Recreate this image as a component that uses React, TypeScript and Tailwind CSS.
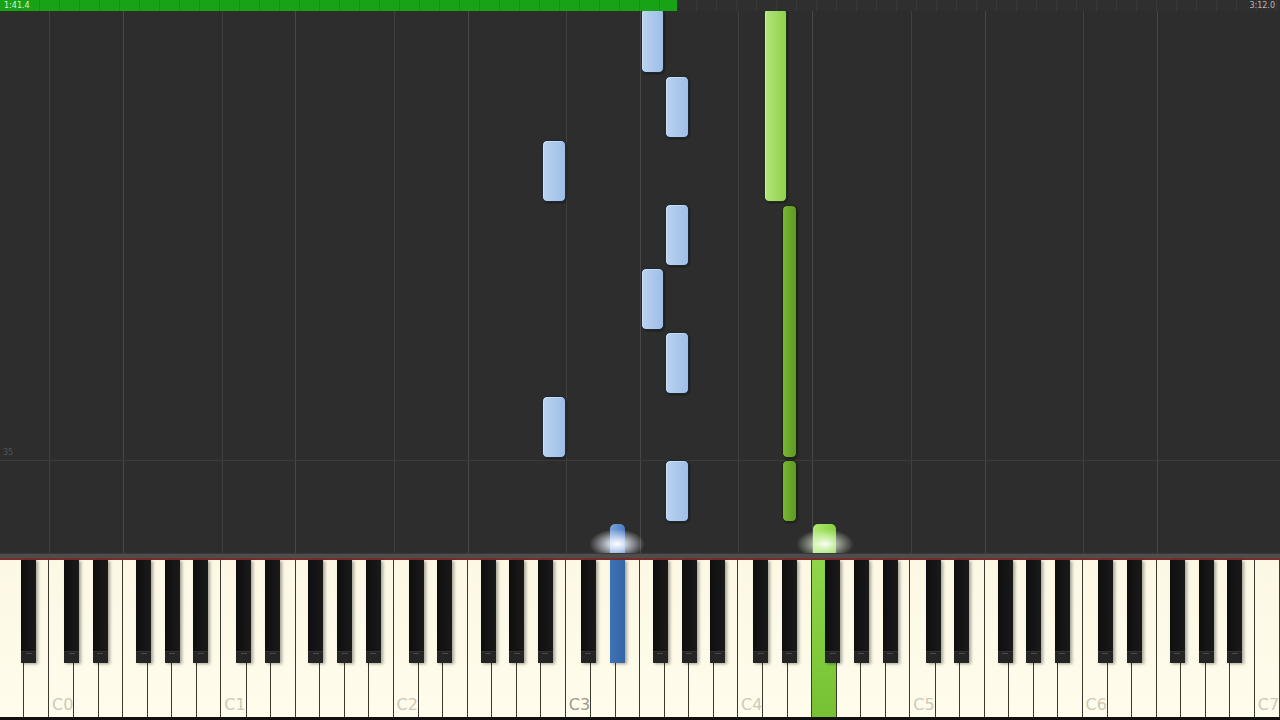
import React from 'react';

const WHITE_W = 1280 / 52;
const OCT = WHITE_W * 7;
const C0_X = WHITE_W * 2;
const BLACK_OFFSETS = [14.8, 43.5, 86.8, 115.5, 144.1];

// white key index: A-1 = 0, B-1 = 1, C0 = 2 ...
const whiteX = (idx: number) => idx * WHITE_W;
const blackX = (octave: number, n: number) => C0_X + octave * OCT + BLACK_OFFSETS[n];

type Note = { x: number; w: number; top: number; bottom: number; kind: 'blue' | 'green' | 'darkgreen' | 'blueHit' | 'greenHit' };

const notes: Note[] = [
  { x: whiteX(26), w: WHITE_W, top: 8, bottom: 73, kind: 'blue' },
  { x: whiteX(27), w: WHITE_W, top: 76, bottom: 138, kind: 'blue' },
  { x: whiteX(22), w: WHITE_W, top: 140, bottom: 202, kind: 'blue' },
  { x: whiteX(27), w: WHITE_W, top: 204, bottom: 266, kind: 'blue' },
  { x: whiteX(26), w: WHITE_W, top: 268, bottom: 330, kind: 'blue' },
  { x: whiteX(27), w: WHITE_W, top: 332, bottom: 394, kind: 'blue' },
  { x: whiteX(22), w: WHITE_W, top: 396, bottom: 458, kind: 'blue' },
  { x: whiteX(27), w: WHITE_W, top: 460, bottom: 522, kind: 'blue' },
  { x: blackX(3, 1), w: 15.3, top: 524, bottom: 560, kind: 'blueHit' },
  { x: whiteX(31), w: WHITE_W, top: 8, bottom: 202, kind: 'green' },
  { x: blackX(4, 1), w: 15.3, top: 205, bottom: 458, kind: 'darkgreen' },
  { x: blackX(4, 1), w: 15.3, top: 460, bottom: 522, kind: 'darkgreen' },
  { x: whiteX(33), w: WHITE_W, top: 524, bottom: 560, kind: 'greenHit' },
];

const noteClass: Record<Note['kind'], string> = {
  blue: 'bg-[linear-gradient(90deg,#b9d3f1,#9ebee6)] border border-[#1e2732] rounded-[5px] shadow-[inset_1px_1px_0_rgba(255,255,255,0.35),1px_1px_2px_rgba(0,0,0,0.4)]',
  green: 'bg-[linear-gradient(90deg,#b3e57c,#8fd24a)] border border-[#26301c] rounded-[5px] shadow-[inset_1px_1px_0_rgba(255,255,255,0.35),1px_1px_2px_rgba(0,0,0,0.4)]',
  darkgreen: 'bg-[linear-gradient(90deg,#78b634,#5c9a22)] border border-[#1d2614] rounded-[5px] shadow-[1px_1px_2px_rgba(0,0,0,0.4)]',
  blueHit: 'bg-[linear-gradient(90deg,#7aa3da,#4c7cbf)] rounded-t-[5px]',
  greenHit: 'bg-[linear-gradient(90deg,#b0e874,#86d03e)] rounded-t-[5px]',
};

const whiteKeys = Array.from({ length: 52 }, (_, i) => i);
const blackKeys: { x: number; pressed?: boolean }[] = [{ x: C0_X - OCT + BLACK_OFFSETS[4] }];
for (let o = 0; o < 7; o++) {
  for (let n = 0; n < 5; n++) {
    blackKeys.push({ x: blackX(o, n), pressed: o === 3 && n === 1 });
  }
}

const gridLines: { x: number; f: boolean }[] = [];
for (let o = 0; o < 7; o++) {
  gridLines.push({ x: C0_X + o * OCT, f: false });
  gridLines.push({ x: C0_X + o * OCT + WHITE_W * 3, f: true });
}

function TopBar() {
  return (
    <div className="h-[11px] flex shrink-0 text-[8px] leading-[11px] font-['DejaVu_Sans',sans-serif]">
      <div className="w-[677px] bg-[#18a317] bg-[repeating-linear-gradient(90deg,transparent_0px,transparent_19px,#139012_19px,#139012_20px)] text-[#d8f0d4] pl-[4px]">
        1:41.4
      </div>
      <div className="flex-1 bg-[#2f2f2f] bg-[repeating-linear-gradient(90deg,transparent_0px,transparent_19px,#383838_19px,#383838_20px)] text-[#b8b8b8] text-right pr-[5px]">
        3:12.0
      </div>
    </div>
  );
}

function NoteField() {
  return (
    <div className="relative h-[542px] shrink-0 overflow-hidden bg-[#2d2d2d]">
      {gridLines.map((g, i) => (
        <div
          key={i}
          className={`absolute top-0 bottom-0 w-px ${g.f ? 'bg-[#474747]' : 'bg-[#3f3f3f]'}`}
          style={{ left: Math.round(g.x) }}
        />
      ))}
      <div className="absolute left-0 right-0 top-[449px] h-px bg-[#3b3b3b]" />
      <div className="absolute left-[3px] top-[436px] text-[8px] text-[#555] font-['DejaVu_Sans',sans-serif]">35</div>

      {notes.map((n, i) => {
        const top = n.top - 11;
        const pad = n.w > 20 ? 0.5 : 0;
        return (
          <div
            key={i}
            className={`absolute ${noteClass[n.kind]}`}
            style={{ left: n.x + pad, width: n.w - pad * 2, top, height: n.bottom - n.top }}
          />
        );
      })}

      {/* hit glows */}
      <div className="absolute left-[589px] top-[518px] w-[56px] h-[30px] rounded-full bg-[radial-gradient(ellipse_at_center,rgba(255,255,255,1)_0%,rgba(235,242,255,0.75)_25%,rgba(255,255,255,0)_70%)]" />
      <div className="absolute left-[796px] top-[518px] w-[58px] h-[30px] rounded-full bg-[radial-gradient(ellipse_at_center,rgba(255,255,255,0.95)_0%,rgba(238,255,225,0.65)_25%,rgba(255,255,255,0)_70%)]" />
    </div>
  );
}

function Keyboard() {
  return (
    <div className="relative h-[157px] shrink-0 flex bg-[#2a2820]">
      {whiteKeys.map((i) => {
        const isC = (i - 2) % 7 === 0 && i >= 2;
        const octave = (i - 2) / 7;
        const pressed = i === 33;
        return (
          <div
            key={i}
            className={`relative flex-1 border-r border-[#3c392e] flex items-end ${
              pressed
                ? 'bg-[linear-gradient(180deg,#8fd64a,#76c232)]'
                : 'bg-[linear-gradient(180deg,#fcf8e4,#fffcec)]'
            }`}
          >
            {isC && (
              <span
                className={`pl-[3px] pb-[4px] text-[16px] leading-none font-['DejaVu_Sans',sans-serif] ${
                  octave === 3 ? 'text-[#9c9a8c]' : 'text-[#cdcab8]'
                }`}
              >
                C{octave}
              </span>
            )}
          </div>
        );
      })}
      {blackKeys.map((b, i) => (
        <div
          key={i}
          className={`absolute top-0 w-[15px] h-[103px] flex flex-col shadow-[2px_1px_3px_rgba(0,0,0,0.35)] ${
            b.pressed ? 'bg-[linear-gradient(90deg,#3f72b4,#3565a6)]' : 'bg-[linear-gradient(90deg,#0e0e0e,#1a1a1a)]'
          }`}
          style={{ left: b.x }}
        >
          <div className="flex-1" />
          {!b.pressed && (
            <div className="h-[12px] bg-[#242424] border-t border-[#333] flex justify-center pt-[1px]">
              <div className="w-[6px] h-px bg-[#4a4a4a]" />
            </div>
          )}
        </div>
      ))}
    </div>
  );
}

export default function App() {
  return (
    <div className="w-[1280px] h-[720px] overflow-hidden flex flex-col bg-[#2d2d2d]">
      <TopBar />
      <NoteField />
      <div className="h-[7px] shrink-0 bg-[#4d4d4d] border-t border-[#3a3a3a] border-b-2 border-b-[#7c2a2a]" />
      <Keyboard />
      <div className="flex-1 bg-[#111]" />
    </div>
  );
}
